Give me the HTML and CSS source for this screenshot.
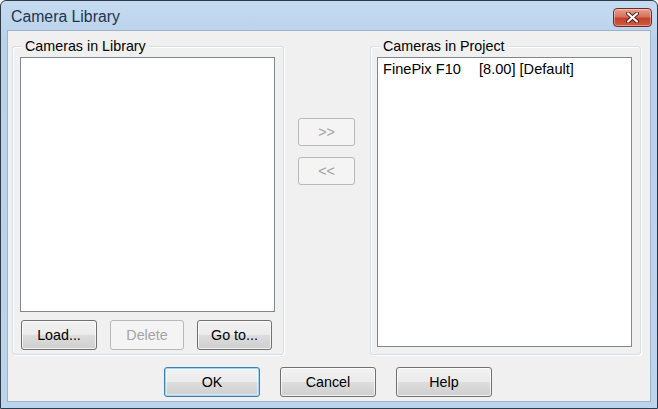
FILE: index.html
```html
<!DOCTYPE html>
<html>
<head>
<meta charset="utf-8">
<link rel="stylesheet" href="styles.css">
</head>
<body>
<div class="window">
  <div class="titlebar">
    <span class="title">Camera Library</span>
    <div class="close">
      <svg width="17" height="11" viewBox="0 0 17 11">
        <path d="M4 1.5 L13 9.5 M13 1.5 L4 9.5" stroke="#5a1b14" stroke-width="4" stroke-linecap="round"/>
        <path d="M4 1.5 L13 9.5 M13 1.5 L4 9.5" stroke="#ffffff" stroke-width="2.2" stroke-linecap="round"/>
      </svg>
    </div>
  </div>
  <div class="client">
    <div class="main">
      <div class="group left">
        <span class="legend">Cameras in Library</span>
        <div class="listbox lib"></div>
        <div class="group-buttons">
          <button class="btn w76">Load...</button>
          <button class="btn w74 disabled">Delete</button>
          <button class="btn w75">Go to...</button>
        </div>
      </div>
      <div class="middle">
        <button class="btn small disabled">&gt;&gt;</button>
        <button class="btn small disabled">&lt;&lt;</button>
      </div>
      <div class="group right">
        <span class="legend">Cameras in Project</span>
        <div class="listbox proj">
          <div class="item"><span class="name">FinePix F10</span><span>[8.00] [Default]</span></div>
        </div>
      </div>
    </div>
    <div class="footer">
      <button class="btn big default">OK</button>
      <button class="btn big">Cancel</button>
      <button class="btn big">Help</button>
    </div>
  </div>
</div>
</body>
</html>
```
FILE: styles.css
```css
* { box-sizing: border-box; }
html, body { margin: 0; padding: 0; background: #ffffff; }
body { width: 658px; height: 409px; overflow: hidden; font-family: "Liberation Sans", Arial, sans-serif; font-size: 14.3px; color: #000; }

.window {
  width: 658px; height: 409px;
  border: 1px solid #2e3b49;
  border-radius: 6px 6px 0 0;
  background: linear-gradient(#c5dbf1, #b9d1ea 40px, #bcd4ec);
  display: flex; flex-direction: column;
}
.titlebar {
  height: 29px; flex: none;
  display: flex; align-items: center;
  padding-left: 10px; padding-right: 5px;
}
.title { font-family: "Liberation Sans", Arial, sans-serif; font-size: 15.8px; color: #1e3450; flex: 1; margin-top: 2px; }
.close {
  width: 39px; height: 19px; margin-top: 4px;
  border: 1px solid #6e2c22; border-radius: 4px;
  background: linear-gradient(#e8a393, #d7705e 45%, #c5412c 55%, #cf5a3f);
  box-shadow: inset 0 0 0 1px rgba(255,255,255,0.35);
  display: flex; align-items: center; justify-content: center;
}
.client {
  flex: 1;
  margin: 0 6px 6px 6px;
  background: #f0f0f0;
  border: 1px solid #9fb4ca;
  display: flex; flex-direction: column;
}
.main {
  display: grid;
  grid-template-columns: 272px 86px 271px;
  padding-left: 4px; padding-top: 15px;
}
.group {
  position: relative;
  height: 309px;
  border: 1px solid #d5dfe5;
  border-radius: 3px;
  box-shadow: inset 1px 1px 0 #ffffff, 1px 1px 0 #ffffff;
}
.legend {
  position: absolute; top: -10px; left: 9px;
  background: #f0f0f0; padding: 0 3px;
  line-height: 18px;
}
.right .legend { left: 9px; }
.left { padding: 10px 7px 0 7px; }
.right { padding: 10px 7px 0 6px; }
.listbox {
  background: #ffffff;
  border: 1px solid #828790;
  width: 255px;
}
.lib { height: 255px; }
.proj { height: 290px; padding: 3px 0 0 5px; }
.item { display: flex; line-height: 17px; font-size: 14.6px; }
.item .name { flex: none; width: 96px; }
.group-buttons { display: flex; gap: 13px; margin-top: 8px; padding-left: 1px; }
.btn {
  font-family: "Liberation Sans", Arial, sans-serif; font-size: 14.3px; color: #000;
  height: 30px; padding: 0;
  border: 1px solid #707070; border-radius: 3px;
  background: linear-gradient(#f2f2f2, #ebebeb 50%, #dddddd 50%, #cfcfcf);
  box-shadow: inset 0 0 0 1px rgba(255,255,255,0.7);
}
.btn.disabled { color: #a3a3a3; border-color: #b5b9bc; background: #f4f4f4; box-shadow: none; }
.w76 { width: 76px; } .w74 { width: 74px; } .w75 { width: 75px; }
.middle { display: flex; flex-direction: column; align-items: flex-start; padding-left: 14px; padding-top: 72px; gap: 11px; }
.btn.small { width: 57px; height: 28px; }
.footer { display: flex; justify-content: center; gap: 20px; margin-top: 12px; padding-right: 2px; }
.btn.big { width: 96px; }
.btn.default { border-color: #3c7fb1; box-shadow: inset 0 0 0 1px #9ed5f5, inset 0 0 0 2px rgba(255,255,255,0.5); }
```
